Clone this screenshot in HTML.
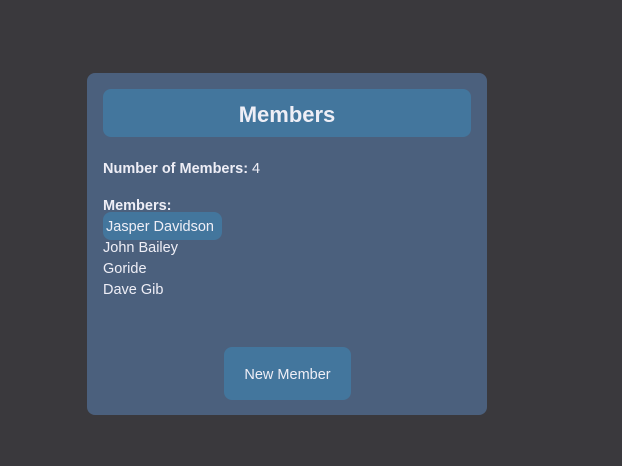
<!DOCTYPE html>
<html><head><style>
body{margin:0;width:622px;height:466px;background:#3a393d;font-family:"Liberation Sans",sans-serif;color:#eeeef6;position:relative;overflow:hidden}
.card{position:absolute;left:87px;top:73px;width:400px;height:342px;background:#4b607d;border-radius:8px}
.hdr{position:absolute;left:16px;top:16px;width:368px;height:48px;background:#43769d;border-radius:8px;text-align:center;line-height:52px;font-weight:bold;font-size:22px}
.t{position:absolute;left:16px;font-size:14.5px;line-height:20px;white-space:nowrap}
.btn{position:absolute;left:137px;top:274px;width:127px;height:53px;background:#43769d;border-radius:8px;text-align:center;line-height:56px;font-size:14.5px}
</style></head><body>
<div class="card">
<div class="hdr">Members</div>
<div class="t" style="top:86px"><b>Number of Members:</b> 4</div>
<div class="t" style="top:123px"><b>Members:</b></div>
<div style="position:absolute;left:16px;top:139px;width:119px;height:28px;background:#43769d;border-radius:8px"></div>
<div class="t" style="top:144px;left:19px">Jasper Davidson</div>
<div class="t" style="top:165px">John Bailey</div>
<div class="t" style="top:186px">Goride</div>
<div class="t" style="top:207px">Dave Gib</div>
<div class="btn">New Member</div>
</div>
</body></html>
